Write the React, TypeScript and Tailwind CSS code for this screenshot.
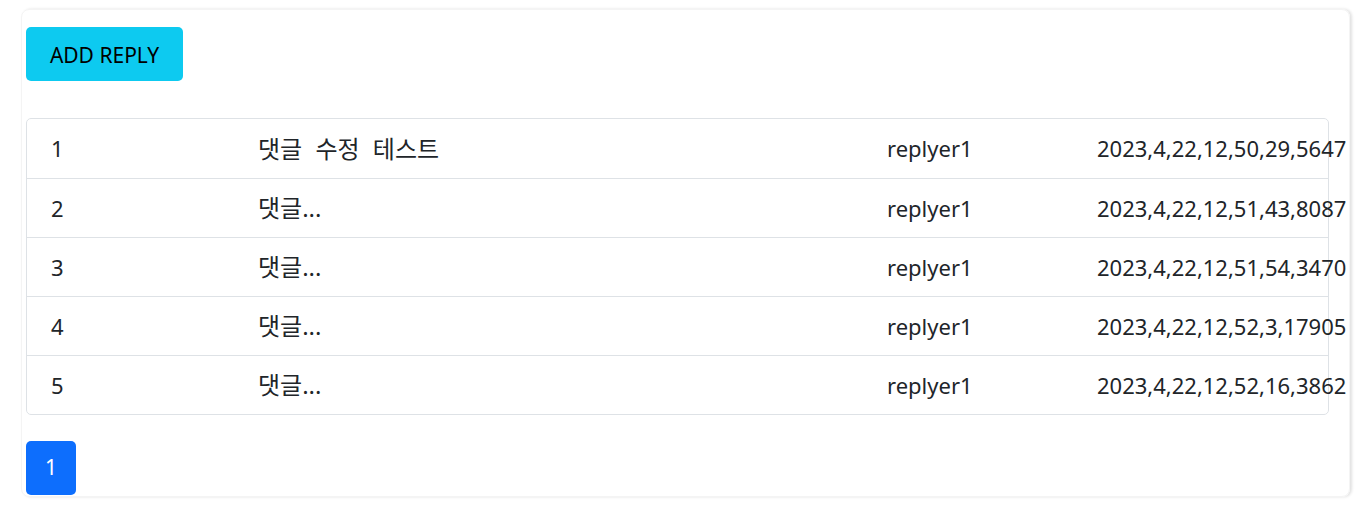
import React from "react";

const rows = [
  { id: 1, content: "댓글 수정 테스트", replyer: "replyer1", date: "2023,4,22,12,50,29,5647" },
  { id: 2, content: "댓글...", replyer: "replyer1", date: "2023,4,22,12,51,43,8087" },
  { id: 3, content: "댓글...", replyer: "replyer1", date: "2023,4,22,12,51,54,3470" },
  { id: 4, content: "댓글...", replyer: "replyer1", date: "2023,4,22,12,52,3,17905" },
  { id: 5, content: "댓글...", replyer: "replyer1", date: "2023,4,22,12,52,16,3862" },
];

export default function App() {
  return (
    <div
      className="w-[1360px] h-[518px] bg-white pt-[9px] pl-[21px] text-[#212529]"
      style={{ fontFamily: '"Noto Sans", "Noto Sans CJK KR", sans-serif' }}
    >
      <div className="w-[1329px] h-[488px] rounded-[8px] border border-[#f4f4f4] shadow-[2px_0_3px_rgba(0,0,0,0.12)] overflow-hidden pt-[17px] pl-[4px]">
        <button className="h-[54px] w-[157px] rounded-[5px] bg-[#0dcaf0] pt-[4px] text-[21px] text-black">
          ADD REPLY
        </button>
        <div className="mt-[37px] w-[1303px] rounded-[5px] border border-[#dee2e6] overflow-visible">
          {rows.map((r, i) => (
            <div
              key={r.id}
              className={`grid grid-cols-[207px_629px_210px_1fr] h-[59px] items-center text-[22px] whitespace-nowrap ${i > 0 ? "border-t border-[#dee2e6]" : ""}`}
            >
              <div className="pl-[24px]">{r.id}</div>
              <div className="pl-[24px] text-[24px] [word-spacing:7px]">{r.content}</div>
              <div className="pl-[24px]">{r.replyer}</div>
              <div className="pl-[24px]">{r.date}</div>
            </div>
          ))}
        </div>
        <button className="mt-[26px] h-[54px] w-[50px] rounded-[5px] bg-[#0d6efd] text-white text-[21px]">
          1
        </button>
      </div>
    </div>
  );
}
